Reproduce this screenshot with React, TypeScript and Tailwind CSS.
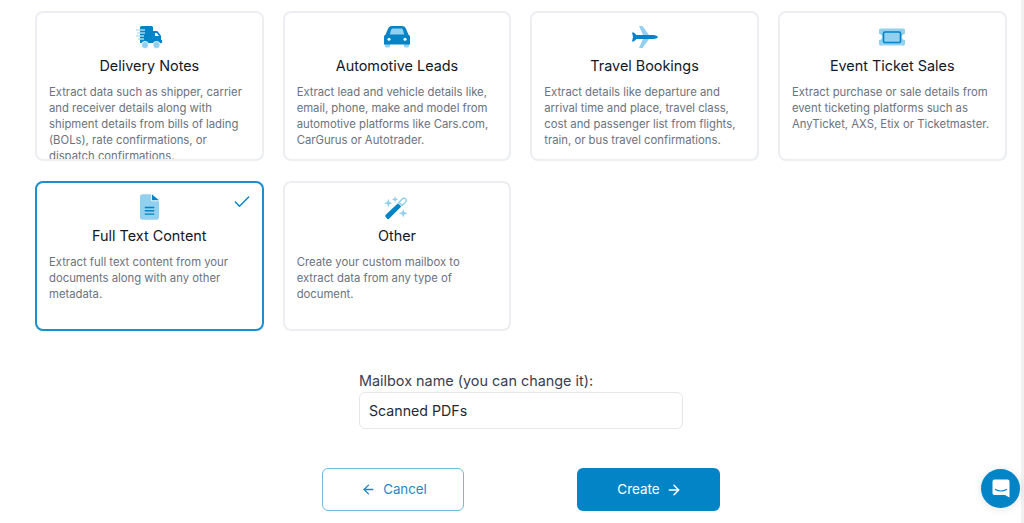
import { ArrowLeft, ArrowRight, Check } from "lucide-react";
import type { ReactNode } from "react";

const dark = "#0284c7";
const light = "#93cfee";

function TruckIcon() {
  return (
    <svg width="28" height="24" viewBox="0 0 28 24">
      <path d="M5 2.500a1.500 1.500 0 0 1 1.500-1.500h10a1.500 1.500 0 0 1 1.500 1.500V18H5z" fill={dark} />
      <path d="M18 6h3.500c.5 0 1 .2 1.300.6l3 4c.2.3.3.6.3 1V15h1v2.500l-1 .7H18z" fill={dark} />
      <path d="M20 8h1.800l2.200 3h-4z" fill="#fff" />
      <path d="M1 5h9M2 8h8M1 11h8M3 14h6" stroke="#fff" strokeWidth="1.200" />
      <path d="M1 5h4M2 8h3M1 11h4M3 14h2" stroke={light} strokeWidth="1.200" />
      <circle cx="10" cy="20" r="3.600" fill={light} stroke="#fff" strokeWidth="0.800" />
      <circle cx="21.500" cy="20" r="3.600" fill={light} stroke="#fff" strokeWidth="0.800" />
    </svg>
  );
}

function CarIcon() {
  return (
    <svg width="28" height="24" viewBox="0 0 28 24">
      <path d="M2 18h5v3a1.500 1.500 0 0 1-1.500 1.500h-2A1.500 1.500 0 0 1 2 21zM21 18h5v3a1.500 1.500 0 0 1-1.500 1.500h-2A1.500 1.500 0 0 1 21 21z" fill={light} />
      <path d="M1 12c0-1 .6-1.800 1.500-2.200L5 3.800C5.600 2.200 7 1 9 1h10c2 0 3.400 1.200 4 2.800l2.500 6c.9.4 1.500 1.200 1.500 2.200v7.500H1z" fill={dark} />
      <path d="M6.800 9.500 8 5c.3-1 1-1.500 2-1.500h8c1 0 1.700.5 2 1.500l1.200 4.500z" fill={light} />
      <circle cx="6" cy="14.200" r="1.500" fill="#fff" />
      <circle cx="22" cy="14.200" r="1.500" fill="#fff" />
    </svg>
  );
}

function PlaneIcon() {
  return (
    <svg width="28" height="24" viewBox="0 0 28 24">
      <path d="M8 1h3.500l6.500 9h-6zM12 14h6l-6.500 9H8z" fill={light} />
      <path d="M1 7.500h1.800L5.500 10H22c2.500 0 4.500 1 5 2-.5 1-2.500 2-5 2H5.500l-2.700 2.500H1l1-4.500z" fill={dark} />
    </svg>
  );
}

function TicketIcon() {
  return (
    <svg width="28" height="20" viewBox="0 0 28 20">
      <path d="M2.500 1.500h23a1.500 1.500 0 0 1 1.500 1.500v4a3 3 0 0 0 0 6v4a1.500 1.500 0 0 1-1.500 1.500h-23A1.500 1.500 0 0 1 1 17v-4a3 3 0 0 0 0-6V3a1.500 1.500 0 0 1 1.500-1.500z" fill={light} />
      <rect x="5.500" y="5" width="17" height="10.500" rx="1.200" fill={light} stroke={dark} strokeWidth="1.600" />
    </svg>
  );
}

function DocIcon() {
  return (
    <svg width="19" height="26" viewBox="0 0 20 27">
      <path d="M2.500 0H11.500v5.500a2 2 0 0 0 2 2H20v17a2.500 2.500 0 0 1-2.500 2.500h-15A2.500 2.500 0 0 1 0 24.500v-22A2.500 2.500 0 0 1 2.500 0z" fill={light} />
      <path d="M12.500 0 20 6.500h-7.500z" fill={dark} />
      <path d="M5 14h10M5 17.500h10M5 21h10" stroke={dark} strokeWidth="1.500" />
    </svg>
  );
}

function WandIcon() {
  return (
    <svg width="25" height="25" viewBox="0 0 26 26">
      <path d="M1.800 20.500 14.500 8.500l3.500 3.500L5.500 24.500a1.800 1.800 0 0 1-2.500 0L1.800 23a1.800 1.800 0 0 1 0-2.500z" fill={dark} />
      <path d="m15.500 7.500 4-3.700a2 2 0 0 1 2.700 0l.5.500a2 2 0 0 1 0 2.700L19 11z" fill="none" stroke={light} strokeWidth="1.500" />
      <path d="M4.500 4 5.700 7.300 9 8.500 5.700 9.700 4.500 13 3.300 9.700 0 8.500 3.300 7.300zM11.500 1l.9 2.600 2.600.9-2.600.9-.9 2.600-.9-2.600-2.600-.9 2.600-.9zM20 14.500l1.200 3.300 3.300 1.200-3.300 1.200-1.200 3.300-1.200-3.300-3.300-1.200 3.300-1.200z" fill={light} />
    </svg>
  );
}

function Card({ icon, title, text, selected }: { icon: ReactNode; title: string; text: string; selected?: boolean }) {
  return (
    <div className={`relative h-[150px] overflow-hidden rounded-lg border-2 bg-white px-[12px] ${selected ? "border-[#1a8fcd]" : "border-[#eceef2]"}`}>
      {selected && <Check className="absolute right-[10px] top-[9px] text-[#0284c7]" size={20} strokeWidth={1.700} />}
      <div className="mt-[10px] flex h-[28px] items-center justify-center">{icon}</div>
      <h3 className="mt-[3.500px] text-center text-[14.400px] leading-[22px] text-[#111827]">{title}</h3>
      <p className="mt-[7px] text-[11.300px] leading-[16px] text-[#6b7280]">{text}</p>
    </div>
  );
}

export default function App() {
  return (
    <div className="relative h-[523px] w-[1024px] overflow-hidden bg-white font-['Inter',sans-serif]">
      <div className="absolute right-0 top-0 h-full w-[3px] bg-[#f1f1f1]" />
      <div className="pl-[35px] pr-[17.500px] pt-[11px]">
        <div className="grid grid-cols-4 gap-x-[19px] gap-y-[20px]">
          <Card
            icon={<TruckIcon />}
            title="Delivery Notes"
            text="Extract data such as shipper, carrier and receiver details along with shipment details from bills of lading (BOLs), rate confirmations, or dispatch confirmations."
          />
          <Card
            icon={<CarIcon />}
            title="Automotive Leads"
            text="Extract lead and vehicle details like, email, phone, make and model from automotive platforms like Cars.com, CarGurus or Autotrader."
          />
          <Card
            icon={<PlaneIcon />}
            title="Travel Bookings"
            text="Extract details like departure and arrival time and place, travel class, cost and passenger list from flights, train, or bus travel confirmations."
          />
          <Card
            icon={<TicketIcon />}
            title="Event Ticket Sales"
            text="Extract purchase or sale details from event ticketing platforms such as AnyTicket, AXS, Etix or Ticketmaster."
          />
          <Card
            selected
            icon={<DocIcon />}
            title="Full Text Content"
            text="Extract full text content from your documents along with any other metadata."
          />
          <Card
            icon={<WandIcon />}
            title="Other"
            text="Create your custom mailbox to extract data from any type of document."
          />
        </div>
      </div>

      <div className="ml-[359px] mt-[39px] w-[324px]">
        <label className="block text-[14.400px] leading-[22px] text-[#374151]">Mailbox name (you can change it):</label>
        <input
          readOnly
          value="Scanned PDFs"
          className="block h-[37px] w-full rounded-md border border-[#e5e7eb] bg-white px-[9px] text-[14.200px] text-[#1f2937] outline-none"
        />
      </div>

      <div className="ml-[322px] mt-[39px] flex w-[398px] justify-between">
        <button className="flex h-[43px] w-[142px] items-center justify-center gap-[7px] rounded-md border border-[#6dbbe3] bg-white pl-[2px] text-[13.300px] text-[#1f87c6]">
          <ArrowLeft size={15} strokeWidth={2.200} />
          Cancel
        </button>
        <button className="flex h-[43px] w-[143px] items-center justify-center gap-[6px] rounded-md bg-[#0284c7] pl-[2px] text-[13.500px] text-white">
          Create
          <ArrowRight size={16} strokeWidth={2.200} />
        </button>
      </div>

      <div className="absolute left-[981px] top-[469px] flex h-[39px] w-[39px] items-center justify-center rounded-full bg-[#0284c7] shadow-[0_1px_8px_rgba(0,0,0,0.12)]">
        <svg width="18" height="19" viewBox="0 0 18 19">
          <path d="M2.500.5h13a2 2 0 0 1 2 2v16l-4.500-2.500H2.500a2 2 0 0 1-2-2V2.500a2 2 0 0 1 2-2z" fill="#fff" />
          <path d="M3.500 10.500c3 2 8 2 11 0" fill="none" stroke="#0284c7" strokeWidth="1.200" strokeLinecap="round" />
        </svg>
      </div>
    </div>
  );
}
